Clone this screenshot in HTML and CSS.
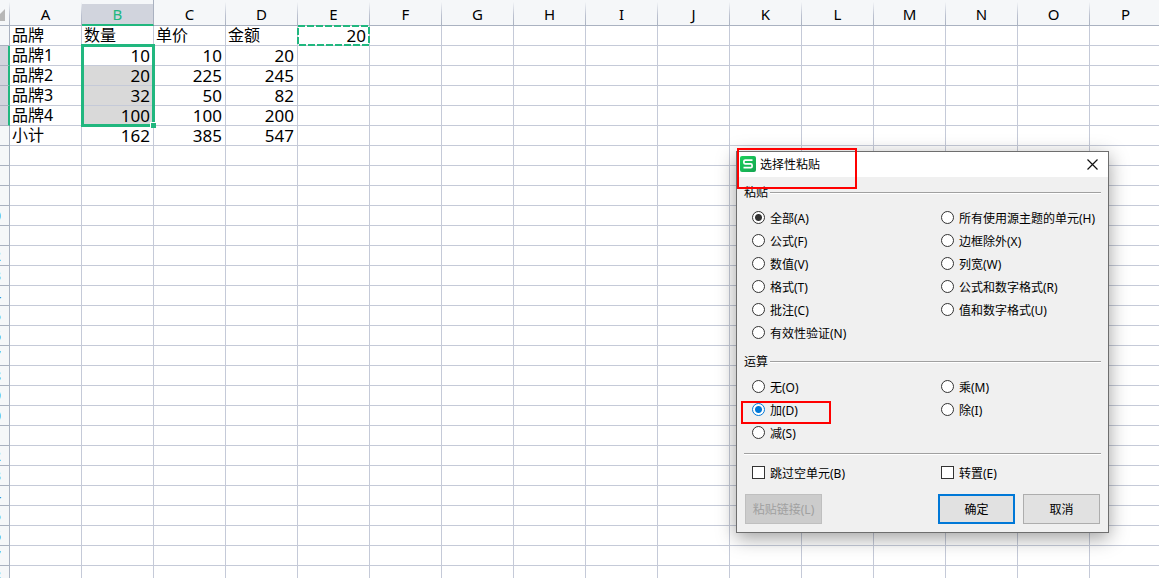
FILE: index.html
```html
<!DOCTYPE html>
<html lang="zh-CN">
<head>
<meta charset="utf-8">
<title>选择性粘贴</title>
<link rel="stylesheet" href="styles.css">
</head>
<body>
<main class="sheet">
  <table class="grid">
    <thead><tr id="columns"><th class="corner"><svg width="5" height="12" viewBox="0 0 5 12"><path d="M5 0V12H0V5Z" fill="#b7b7b7"/></svg></th></tr></thead>
    <tbody id="rows"></tbody>
  </table>
  <div class="selection"><span class="handle"></span></div>
  <svg class="copied" width="73" height="21" viewBox="0 0 73 21"><rect x="1" y="1" width="71" height="19" fill="none" stroke="#21b77f" stroke-width="2" stroke-dasharray="7 2"/></svg>
</main>

<form class="dialog" role="dialog" aria-labelledby="dialog-title">
  <header class="titlebar">
    <svg class="logo" width="16" height="16" viewBox="0 0 16 16"><defs><linearGradient id="g" x1="0" y1="0" x2="1" y2="1"><stop offset="0" stop-color="#1bd15a"/><stop offset="1" stop-color="#15a452"/></linearGradient></defs><rect width="16" height="16" rx="2" fill="url(#g)"/><path d="M12.5 4.2H5.2Q3.9 4.2 3.9 5.6V6.4Q3.9 7.9 5.2 7.9H10.8Q12.1 7.9 12.1 9.4V10.2Q12.1 11.7 10.8 11.7H3.5" fill="none" stroke="#fff" stroke-width="1.7"/></svg>
    <span class="title" id="dialog-title">选择性粘贴</span>
    <button class="close" type="button" aria-label="关闭"><svg width="11" height="11" viewBox="0 0 11 11"><path d="M.5 .5L10.5 10.5M10.5 .5L.5 10.5" stroke="#111" stroke-width="1.2"/></svg></button>
  </header>
  <div class="body">
    <fieldset class="group">
      <legend class="legend">粘贴</legend>
      <div class="options">
        <div class="column">
          <label class="option"><input type="radio" name="paste" checked>全部(A)</label>
          <label class="option"><input type="radio" name="paste">公式(F)</label>
          <label class="option"><input type="radio" name="paste">数值(V)</label>
          <label class="option"><input type="radio" name="paste">格式(T)</label>
          <label class="option"><input type="radio" name="paste">批注(C)</label>
          <label class="option"><input type="radio" name="paste">有效性验证(N)</label>
        </div>
        <div class="column">
          <label class="option"><input type="radio" name="paste">所有使用源主题的单元(H)</label>
          <label class="option"><input type="radio" name="paste">边框除外(X)</label>
          <label class="option"><input type="radio" name="paste">列宽(W)</label>
          <label class="option"><input type="radio" name="paste">公式和数字格式(R)</label>
          <label class="option"><input type="radio" name="paste">值和数字格式(U)</label>
        </div>
      </div>
    </fieldset>
    <fieldset class="group">
      <legend class="legend">运算</legend>
      <div class="options">
        <div class="column">
          <label class="option"><input type="radio" name="operation">无(O)</label>
          <label class="option active"><input type="radio" name="operation" checked>加(D)</label>
          <label class="option"><input type="radio" name="operation">减(S)</label>
        </div>
        <div class="column">
          <label class="option"><input type="radio" name="operation">乘(M)</label>
          <label class="option"><input type="radio" name="operation">除(I)</label>
        </div>
      </div>
    </fieldset>
    <hr class="rule">
    <div class="options">
      <label class="option"><input type="checkbox">跳过空单元(B)</label>
      <label class="option"><input type="checkbox">转置(E)</label>
    </div>
    <footer class="actions">
      <button class="button link" type="button" disabled>粘贴链接(L)</button>
      <button class="button primary" type="button">确定</button>
      <button class="button" type="button">取消</button>
    </footer>
  </div>
  <span class="mark mark-title"></span>
  <span class="mark mark-add"></span>
</form>
<script src="sheet.js"></script>
</body>
</html>
```
FILE: styles.css
```css
*, *::after { box-sizing: border-box; }

body {
  margin: 0;
  height: 100vh;
  overflow: hidden;
  position: relative;
  background: #fff;
  color: #000;
  font-family: "Noto Sans", "Noto Sans CJK SC", sans-serif;
}

.sheet { position: relative; height: 100%; overflow: hidden; }

.grid {
  width: 1px;
  table-layout: fixed;
  border-collapse: separate;
  border-spacing: 0;
}

.grid th, .grid td {
  width: 72px;
  height: 20px;
  padding: 0 3px;
  border: solid #c5cad8;
  border-width: 0 1px 1px 0;
  font-size: 17px;
  line-height: 19px;
  text-align: right;
  white-space: nowrap;
}

.grid td.label {
  padding: 0 2px;
  font-size: 16px;
  text-align: left;
}

.grid thead th {
  height: 26px;
  padding: 4px 0 0;
  background: #f5f7f9;
  border-color: #a9b1c0;
  border-image: linear-gradient(#f5f7f9 10%, #bcc2d0 60%, #a9b1c0) 1;
  font-size: 15px;
  font-weight: 400;
  line-height: 19px;
  text-align: center;
}

.grid thead th.selected {
  color: #21b77f;
  background: linear-gradient(#f5f7f9 4px, #d1d4dd 4px);
  border-image: none;
  border-bottom: 2px solid #21b77f;
}

.grid thead th.corner { width: 10px; padding: 5px 4px 0 0; text-align: left; line-height: 0; }
.corner svg { display: block; }

.grid tbody th {
  width: 10px;
  padding: 0 9px 0 0;
  direction: rtl;
  background: #f5f7f9;
  border-color: #a9b1c0;
  color: #2a7fd0;
  font-size: 15px;
  font-weight: 400;
}

.grid tbody th.selected { background: #d1d4dd; border-right: 2px solid #21b77f; }
.grid td.filled { background: #d9d9d9; }

.selection {
  position: absolute;
  left: 81px;
  top: 44px;
  width: 74px;
  height: 83px;
  border: 3px solid #21b77f;
}

.handle {
  position: absolute;
  right: -4px;
  bottom: -4px;
  width: 6px;
  height: 6px;
  background: #21b77f;
  border: solid #fff;
  border-width: 1px 0 0 1px;
}

.copied { position: absolute; left: 297px; top: 25px; }

.dialog {
  position: absolute;
  left: 736px;
  top: 151px;
  width: 373px;
  background: #f0f0f0;
  border: 1px solid #6e6e6e;
  box-shadow: 0 5px 18px rgba(0, 0, 0, .38);
  font-size: 12px;
}

.titlebar {
  display: flex;
  align-items: center;
  gap: 4px;
  height: 25px;
  padding: 0 10px 1px 3px;
  background: #fff;
}

.title { flex: 1; padding-bottom: 1px; }

.close { padding: 0; border: 0; background: none; line-height: 0; }

.body { padding: 9px 7px 8px; }

.group { margin: 0; padding: 0; border: 0; min-width: 0; }
.group + .group { margin-top: 11px; }

.legend {
  display: flex;
  align-items: center;
  gap: 2px;
  width: 100%;
  height: 14px;
  margin-bottom: 6px;
  padding: 0;
  line-height: 14px;
}

.legend::after {
  content: "";
  flex: 1;
  height: 2px;
  background: #a0a0a0;
  border-bottom: 1px solid #fff;
}

.options {
  display: grid;
  grid-template-columns: 189px 1fr;
  padding-left: 8px;
}

.option {
  display: flex;
  align-items: center;
  gap: 5px;
  height: 23px;
  white-space: nowrap;
}

.option input {
  appearance: none;
  flex: none;
  width: 13px;
  height: 13px;
  margin: 0;
  background: #fff;
  border: 1px solid #333;
}

.option input[type="radio"] { border-radius: 50%; }
.option input[type="radio"]:checked { background: radial-gradient(circle, #333 3px, #fff 4px); }
.active input[type="radio"]:checked { border-color: #0078d7; background: radial-gradient(circle, #0078d7 3px, #fff 4px); }

.rule {
  height: 2px;
  margin: 9px 0 6px;
  background: #a0a0a0;
  border: 0;
  border-bottom: 1px solid #fff;
}

.actions { display: flex; gap: 8px; padding: 10px 1px 0; }

.button {
  width: 77px;
  height: 30px;
  padding: 0;
  background: #e1e1e1;
  border: 1px solid #adadad;
  color: #000;
  font: inherit;
}

.button.primary { border: 2px solid #0078d7; }
.button.link { margin-right: auto; background: #ccc; border-color: #bfbfbf; color: #a0a0a0; }

.mark { position: absolute; border: 2px solid #f00; pointer-events: none; }
.mark-title { left: 0; top: -4px; width: 120px; height: 41px; }
.mark-add { left: 4px; top: 249px; width: 90px; height: 23px; }
```
FILE: sheet.js
```js
const letters = "ABCDEFGHIJKLMNOP";
const data = [
  ["品牌", "数量", "单价", "金额", 20],
  ["品牌1", 10, 10, 20],
  ["品牌2", 20, 225, 245],
  ["品牌3", 32, 50, 82],
  ["品牌4", 100, 100, 200],
  ["小计", 162, 385, 547]
];

const columns = document.getElementById("columns");
for (const letter of letters) {
  const th = document.createElement("th");
  th.textContent = letter;
  if (letter === "B") th.className = "selected";
  columns.append(th);
}

const rows = document.getElementById("rows");
for (let r = 1; r <= 28; r++) {
  const tr = document.createElement("tr");
  const th = document.createElement("th");
  // Single-digit numbers lie wholly outside the scrolled view.
  if (r > 9) th.textContent = r;
  if (r >= 2 && r <= 5) th.className = "selected";
  tr.append(th);
  for (let c = 0; c < letters.length; c++) {
    const td = document.createElement("td");
    const value = (data[r - 1] || [])[c];
    if (value !== undefined) {
      td.textContent = value;
      if (typeof value === "string") td.className = "label";
    }
    if (c === 1 && r >= 3 && r <= 5) td.className = "filled";
    tr.append(td);
  }
  rows.append(tr);
}
```
